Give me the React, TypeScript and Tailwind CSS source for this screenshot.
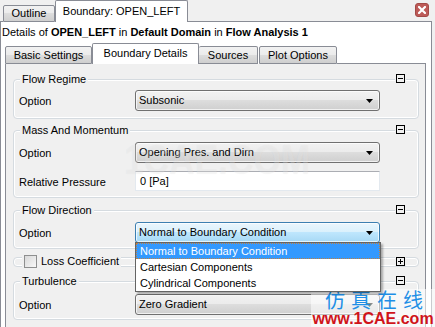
import React from "react";

const btnGrad =
  "bg-[linear-gradient(to_bottom,#f2f2f2_0%,#ebebeb_50%,#dddddd_50%,#cfcfcf_100%)]";

function Arrow() {
  return (
    <svg width="7" height="4" viewBox="0 0 7 4" className="block">
      <path d="M0 0H7L3.5 4Z" fill="#000" />
    </svg>
  );
}

function Combo({ text, focused = false }: { text: string; focused?: boolean }) {
  return (
    <div
      className={
        "w-[245px] h-[21px] rounded-[3px] border flex items-center pl-[3px] pr-[6px] shadow-[inset_0_0_0_1px_rgba(255,255,255,0.7)] " +
        (focused
          ? "border-[#3c7fb1] bg-[linear-gradient(to_bottom,#eaf6fd_0%,#d9f0fc_50%,#bee6fd_50%,#a7d9f5_100%)]"
          : "border-[#707070] " + btnGrad)
      }
    >
      <span className="flex-1 leading-[13px]">{text}</span>
      <Arrow />
    </div>
  );
}

function BoxIcon({ plus = false }: { plus?: boolean }) {
  return (
    <div className="w-[9px] h-[9px] border border-black bg-[#f0f0f0] relative">
      <div className="absolute left-[1px] right-[1px] top-[3px] h-[1px] bg-black" />
      {plus && <div className="absolute top-[1px] bottom-[1px] left-[3px] w-[1px] bg-black" />}
    </div>
  );
}

function Group({
  title,
  children,
  className = "",
}: {
  title: string;
  children: React.ReactNode;
  className?: string;
}) {
  return (
    <div
      className={
        "relative w-[406px] rounded-[4px] border border-[#d5dbe0] shadow-[inset_0_0_0_1px_#ffffff] " +
        className
      }
    >
      <div className="absolute left-[6px] top-[-7px] px-[2px] bg-[#f0f0f0] leading-[13px]">{title}</div>
      <div className="absolute right-[12px] top-[-6px] bg-[#f0f0f0] px-[1px]">
        <BoxIcon />
      </div>
      {children}
    </div>
  );
}

function Row({ label, children, className = "" }: { label: string; children: React.ReactNode; className?: string }) {
  return (
    <div className={"flex items-center pl-[5px] " + className}>
      <div className="w-[116px] leading-[13px] pt-[2px]">{label}</div>
      {children}
    </div>
  );
}

export default function App() {
  return (
    <div className="w-[435px] h-[327px] bg-[#f0f0f0] overflow-hidden relative font-['Liberation_Sans',Arial,sans-serif] text-[11px] text-black">
      {/* outer tab strip */}
      <div className="flex h-[22px] items-end w-[432px]">
        <div className="w-[3px] self-stretch border-b border-[#898c95]" />
        <div
          className={
            "w-[52px] h-[17px] border border-[#898c95] rounded-t-[2px] flex items-center justify-center " + btnGrad
          }
        >
          <span className="leading-[13px]">Outline</span>
        </div>
        <div className="w-[133px] h-[22px] border border-b-0 border-[#898c95] rounded-t-[2px] bg-white flex items-center justify-center pb-[1px]">
          <span className="leading-[13px]">Boundary: OPEN_LEFT</span>
        </div>
        <div className="flex-1 self-stretch border-b border-[#898c95] flex justify-end items-start pt-[3px] pr-[3px]">
          <div className="w-[14px] h-[14px] rounded-[3px] bg-[#bd5b58] border border-[#a34a47] flex items-center justify-center">
            <svg width="8" height="8" viewBox="0 0 8 8">
              <path d="M1 1L7 7M7 1L1 7" stroke="#fff" strokeWidth="2.2" strokeLinecap="square" />
            </svg>
          </div>
        </div>
      </div>

      {/* outer panel */}
      <div className="w-[432px] h-[305px] border-x border-[#898c95] bg-white flex flex-col">
        <div className="h-[21px] flex items-center pl-[1px] pb-[1px] leading-[13px]">
          <span>
            Details of <b>OPEN_LEFT</b> in <b>Default Domain</b> in <b>Flow Analysis 1</b>
          </span>
        </div>

        {/* inner tabs */}
        <div className="ml-[4px] w-[421px] h-[21px] flex items-end">
          <div className={"w-[87px] h-[18px] border border-[#898c95] rounded-t-[2px] flex items-center justify-center " + btnGrad}>
            <span className="leading-[13px]">Basic Settings</span>
          </div>
          <div className="w-[107px] h-[21px] border border-b-0 border-[#898c95] rounded-t-[2px] bg-white flex items-center justify-center pb-[1px]">
            <span className="leading-[13px]">Boundary Details</span>
          </div>
          <div className={"w-[59px] h-[18px] border border-l-0 border-[#898c95] rounded-t-[2px] flex items-center justify-center " + btnGrad}>
            <span className="leading-[13px]">Sources</span>
          </div>
          <div className={"ml-[1px] w-[78px] h-[18px] border border-[#898c95] rounded-t-[2px] flex items-center justify-center " + btnGrad}>
            <span className="leading-[13px]">Plot Options</span>
          </div>
          <div className="flex-1 self-stretch border-b border-[#898c95]" />
        </div>

        {/* inner panel */}
        <div className="ml-[4px] w-[421px] flex-1 bg-[#f0f0f0] border-x border-[#898c95] pl-[7px] flex flex-col">
          <Group title="Flow Regime" className="mt-[15px] pt-[10px] pb-[7px]">
            <Row label="Option">
              <Combo text="Subsonic" />
            </Row>
          </Group>

          <Group title="Mass And Momentum" className="mt-[11px] pt-[11px] pb-[6px]">
            <Row label="Option">
              <Combo text="Opening Pres. and Dirn" />
            </Row>
            <Row label="Relative Pressure" className="mt-[8px]">
              <div className="w-[245px] h-[20px] bg-white border border-[#e3e9ef] border-t-[#abadb3] flex items-center pl-[4px]">
                <span className="leading-[13px]">0 [Pa]</span>
              </div>
            </Row>
          </Group>

          <Group title="Flow Direction" className="mt-[12px] pt-[11px] pb-[5px] z-10">
            <Row label="Option">
              <div className="relative">
                <Combo text="Normal to Boundary Condition" focused />
                <div className="absolute left-0 top-[20px] w-[246px] h-[50px] bg-white border border-[#646464] shadow-[2px_2px_2px_rgba(0,0,0,0.3)] flex flex-col p-0">
                  <div className="h-[16px] bg-[#3399ff] text-white border border-dotted border-[#c08040] flex items-center pl-[3px]">
                    <span className="leading-[13px]">Normal to Boundary Condition</span>
                  </div>
                  <div className="h-[16px] flex items-center pl-[4px]">
                    <span className="leading-[13px]">Cartesian Components</span>
                  </div>
                  <div className="h-[16px] flex items-center pl-[4px]">
                    <span className="leading-[13px]">Cylindrical Components</span>
                  </div>
                </div>
              </div>
            </Row>
          </Group>

          {/* collapsed Loss Coefficient */}
          <div className="relative mt-[8px] w-[406px] h-[10px] rounded-[4px] border border-[#d5dbe0] shadow-[inset_0_0_0_1px_#ffffff]">
            <div className="absolute left-[8px] top-[-4px] flex items-center gap-[4px] bg-[#f0f0f0] px-[2px] h-[15px]">
              <div className="w-[13px] h-[13px] border border-[#8e8f8f] bg-[linear-gradient(135deg,#d8d8d8,#f8f8f8)]" />
              <span className="leading-[13px]">Loss Coefficient</span>
            </div>
            <div className="absolute right-[12px] top-[-1px] bg-[#f0f0f0] px-[1px]">
              <BoxIcon plus />
            </div>
          </div>

          <Group title="Turbulence" className="mt-[14px] pt-[12px] pb-[4px]">
            <Row label="Option">
              <Combo text="Zero Gradient" />
            </Row>
          </Group>
        </div>
      </div>

      {/* faint middle watermark */}
      <div className="absolute left-[124px] top-[139px] origin-left scale-x-[0.84] text-[42px] font-bold leading-[42px] text-white/25 [text-shadow:0_0_1px_rgba(0,0,0,0.05)] pointer-events-none">
        1CAE.COM
      </div>

      {/* bottom-right watermark */}
      <div className="absolute left-[311px] top-[289px] w-[124px] h-[38px] bg-white/55 flex flex-col items-center pointer-events-none">
        <div className="font-['Noto_Sans_CJK_SC',sans-serif] text-[20px] leading-[22px] tracking-[6px] pl-[8px] text-[#1f8fe6]">
          仿真在线
        </div>
        <div className="font-['Liberation_Sans',Arial,sans-serif] font-bold text-[16px] leading-[16px] text-[#d0141a]">
          www.1CAE.com
        </div>
      </div>
    </div>
  );
}
